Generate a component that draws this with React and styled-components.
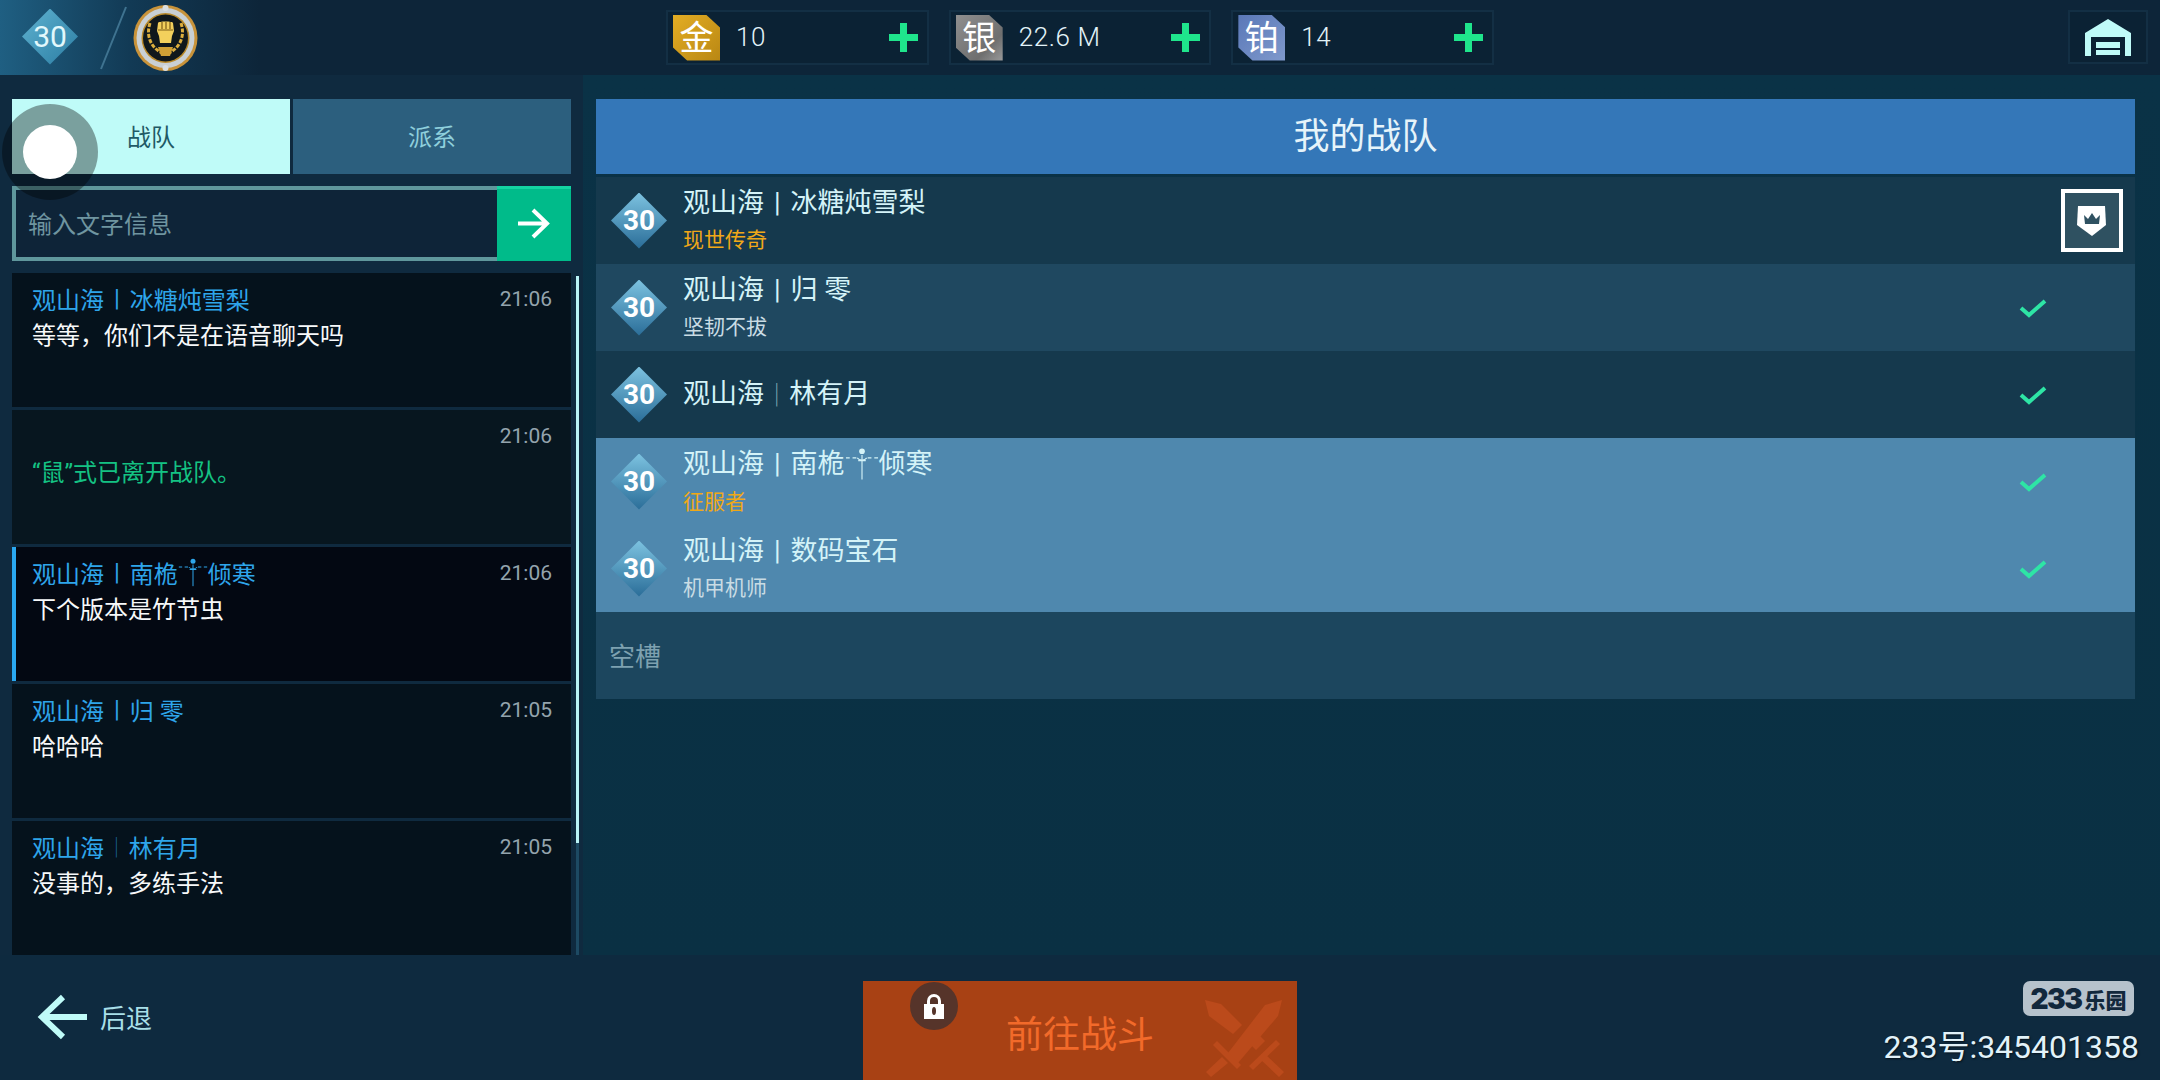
import React from 'react';
import styled, { createGlobalStyle } from 'styled-components';

const GlobalStyle = createGlobalStyle`
	html, body {
		margin: 0;
		padding: 0;
		background: #0d2438;
	}
	body {
		font-family: 'Roboto', 'Noto Sans CJK SC', sans-serif;
	}
`;

const Screen = styled.div`
	position: relative;
	width: 2160px;
	height: 1080px;
	overflow: hidden;
	display: grid;
	grid-template-rows: 75px 880px 125px;
	font-weight: 400;
	color: #dff1f8;
`;

/* top bar */
const TopBar = styled.header`
	display: grid;
	grid-template-columns: 666px 828px 1fr;
	background: linear-gradient(90deg, #1f5f82 0, #123a55 130px, #0d2539 260px, #0d2539 100%);
`;

const PlayerInfo = styled.div`
	display: flex;
	align-items: center;
	padding-left: 22px;
`;

const RankDiamond = styled.div`
	width: 56px;
	height: 56px;
	display: grid;
	place-items: center;
	margin-top: -2px;
	clip-path: polygon(50% 0, 100% 50%, 50% 100%, 0 50%);
	background: linear-gradient(135deg, #5fb2d0, #2b7da3);
	font-size: 30px;
	color: #e2f8fc;
`;

const Slash = styled.svg`
	width: 28px;
	height: 64px;
	margin-left: 21px;
`;

const Medal = styled.svg`
	width: 65px;
	height: 66px;
	margin-left: 6px;
`;

const Wallet = styled.div`
	display: flex;
	align-items: center;
	gap: 20px;
`;

const Currency = styled.div`
	width: 263px;
	height: 55px;
	box-sizing: border-box;
	border: 2px solid #132f44;
	background: #0b2234;
	display: flex;
	align-items: center;
	padding: 0 10px 0 5px;
`;

const CurrencyIcon = styled.div`
	width: 47px;
	height: 46px;
	display: grid;
	place-items: center;
	clip-path: polygon(0 0, 70% 0, 100% 28%, 100% 100%, 30% 100%, 0 72%);
	background: ${(p) => p.$bg};
	color: #fff;
	font-size: 34px;
	line-height: 1;
`;

const CurrencyValue = styled.span`
	margin: 0 0 2px 16px;
	font-size: 26px;
	font-weight: 300;
	letter-spacing: 0.6px;
	color: #e2f3f9;
`;

const PlusIcon = styled.svg`
	width: 29px;
	height: 29px;
	margin-left: auto;
	margin-right: -1px;
`;

const GarageBox = styled.div`
	width: 80px;
	height: 54px;
	box-sizing: border-box;
	margin: 10px 12px 0 auto;
	border: 2px solid #132f44;
	background: #0b2234;
	display: grid;
	place-items: center;
`;

/* middle */
const Middle = styled.main`
	display: grid;
	grid-template-columns: 583px 1fr;
`;

const ChatColumn = styled.section`
	background: #0f2a3f;
	padding: 24px 0 0 12px;
	display: flex;
	flex-direction: column;
	gap: 12px;
`;

const Tabs = styled.div`
	display: flex;
	gap: 3px;
	width: 559px;
`;

const Tab = styled.div`
	flex: 1;
	height: 75px;
	box-sizing: border-box;
	padding-bottom: 3px;
	display: grid;
	place-items: center;
	font-size: 24px;
	background: ${(p) => (p.$active ? '#bffbf8' : '#2c5f7e')};
	color: ${(p) => (p.$active ? '#1f5a66' : '#8fcfdc')};
`;

const InputBar = styled.div`
	width: 559px;
	height: 75px;
	display: flex;
`;

const InputField = styled.div`
	flex: 1;
	box-sizing: border-box;
	border: 4px solid #5f979c;
	border-right: 0;
	background: #0e2438;
	padding: 0 0 2px 12px;
	display: flex;
	align-items: center;
	font-size: 24px;
	color: #6f95a0;
`;

const SendButton = styled.div`
	width: 74px;
	padding-bottom: 4px;
	display: grid;
	place-items: center;
	background: #00bb8a;
	border-top: 3px solid #14d3a2;
	box-sizing: border-box;
`;

const ChatBody = styled.div`
	flex: 1;
	display: flex;
	gap: 5px;
	min-height: 0;
`;

const MessageList = styled.div`
	width: 559px;
	display: flex;
	flex-direction: column;
	gap: 3px;
`;

const Message = styled.article`
	height: 134px;
	box-sizing: border-box;
	padding: 10px 19px 0 ${(p) => (p.$selected ? '16px' : '20px')};
	background: ${(p) => (p.$selected ? '#030812' : p.$system ? '#07161f' : '#05121c')};
	border-left: ${(p) => (p.$selected ? '4px solid #2aa8f0' : '0')};
`;

const MessageHead = styled.div`
	display: flex;
	align-items: center;
	height: 30px;
`;

const Sender = styled.span`
	font-size: 24px;
	color: #2ea5ea;
	display: flex;
	align-items: center;
`;

const Sep = styled.span`
	margin: 0 ${(p) => p.$gap || '10px'};
	font-weight: ${(p) => (p.$thin ? 100 : 400)};
	opacity: ${(p) => (p.$thin ? 0.7 : 1)};
`;

const Time = styled.time`
	margin-left: auto;
	padding-top: 2px;
	font-size: 21px;
	color: #94a4ad;
`;

const MessageText = styled.p`
	margin: 8px 0 0;
	font-size: 24px;
	line-height: 30px;
	color: ${(p) => (p.$system ? '#14c283' : '#f7f9fa')};
`;

const ScrollTrack = styled.div`
	width: 3px;
	margin-top: 3px;
	background: #1d4a63;
`;

const ScrollThumb = styled.div`
	height: 567px;
	background: #b9f3f6;
`;

const SquadPanel = styled.section`
	background: linear-gradient(180deg, #0a3246 0, #0a3043 100%);
	padding: 24px 25px 0 13px;
	display: flex;
	flex-direction: column;
	gap: 3px;
`;

const SquadHeader = styled.h2`
	margin: 0;
	height: 75px;
	box-sizing: border-box;
	padding-bottom: 7px;
	display: grid;
	place-items: center;
	background: #3477b8;
	font-size: 36px;
	font-weight: 400;
	color: #e6f4fa;
`;

const SquadList = styled.div`
	display: flex;
	flex-direction: column;
`;

const rowColors = {
	dark: '#15394d',
	mid: '#1f4860',
	light: '#4f88ae',
	empty: '#1c465e',
};

const SquadRow = styled.div`
	height: 87px;
	display: flex;
	align-items: center;
	padding-left: 15px;
	background: ${(p) => rowColors[p.$tone]};
`;

const LevelDiamond = styled.div`
	width: 56px;
	height: 56px;
	margin-right: 16px;
	flex: none;
	display: grid;
	place-items: center;
	clip-path: polygon(50% 0, 100% 50%, 50% 100%, 0 50%);
	background: linear-gradient(180deg, #7cc2e0 0, #2a6d98 100%);
	font-size: 28px;
	font-weight: 700;
	color: #fff;
`;

const MemberInfo = styled.div`
	display: flex;
	flex-direction: column;
	gap: 10px;
	padding-bottom: 2px;
`;

const MemberName = styled.div`
	display: flex;
	align-items: center;
	font-size: 27px;
	line-height: 30px;
	color: #d4f3f8;
`;

const MemberTitle = styled.div`
	font-size: 21px;
	line-height: 24px;
	color: ${(p) => (p.$gold ? '#f0a818' : '#c9dce4')};
`;

const CheckIcon = styled.svg`
	width: 28px;
	height: 20px;
	margin-left: auto;
	margin-right: 88px;
`;

const LeaderButton = styled.div`
	width: 62px;
	height: 63px;
	box-sizing: border-box;
	margin-left: auto;
	margin-right: 12px;
	border: 4px solid #fff;
	background: #2f5161;
	display: grid;
	place-items: center;
`;

const EmptySlot = styled.span`
	font-size: 26px;
	padding-bottom: 3px;
	color: #7ea1b0;
	margin-left: -2px;
`;

/* bottom bar */
const BottomBar = styled.footer`
	background: #0e2a3f;
	display: grid;
	grid-template-columns: 863px 434px 1fr;
`;

const BackButton = styled.div`
	display: flex;
	align-items: center;
	gap: 13px;
	padding: 0 0 2px 37px;
	height: 125px;
	box-sizing: border-box;
	font-size: 26px;
	color: #a8dfe8;
`;

const BattleButton = styled.div`
	position: relative;
	margin-top: 26px;
	padding-top: 3px;
	background: #a84114;
	display: grid;
	place-items: center;
	font-size: 37px;
	color: #f26a2a;
`;

const LockBadge = styled.div`
	position: absolute;
	left: 47px;
	top: 1px;
	width: 48px;
	height: 48px;
	border-radius: 50%;
	background: #56342a;
	display: grid;
	place-items: center;
`;

const Swords = styled.svg`
	position: absolute;
	right: 12px;
	top: 17px;
	width: 80px;
	height: 80px;
`;

const Watermark = styled.div`
	display: flex;
	flex-direction: column;
	align-items: flex-end;
	padding: 26px 21px 0 0;
	gap: 12px;
`;

const ParkLogo = styled.div`
	width: 111px;
	height: 35px;
	margin-right: 5px;
	border-radius: 7px;
	background: #b6c2cc;
	display: flex;
	align-items: center;
	justify-content: center;
	font-family: 'Inter', 'Noto Sans CJK SC', sans-serif;
	font-size: 28px;
	font-weight: 900;
	letter-spacing: -1.5px;
	color: #12283c;
`;

const ParkLogoCjk = styled.span`
	font-size: 21px;
	letter-spacing: 0;
	margin-left: 3px;
`;

const AccountId = styled.div`
	font-size: 32px;
	line-height: 38px;
	color: #e2f2f9;
	text-shadow: 1px 1px 2px rgba(0, 0, 0, 0.6);
`;

const TouchDot = styled.div`
	position: absolute;
	left: 2px;
	top: 104px;
	width: 96px;
	height: 96px;
	border-radius: 50%;
	background: rgba(0, 0, 0, 0.36);
	display: grid;
	place-items: center;

	&::after {
		content: '';
		width: 54px;
		height: 54px;
		border-radius: 50%;
		background: #fff;
	}
`;

const Ornament = styled.svg`
	width: ${(p) => p.$w}px;
	height: ${(p) => p.$h}px;
	flex: none;
`;

function OrnamentGlyph({ w, h, color }) {
	return (
		<Ornament $w={w} $h={h} viewBox='0 0 36 34' fill='none' stroke={color} strokeWidth='1.2'>
			<path d='M18 8v26M1 11h4M8 11h4M24 11h4M31 11h4' />
			<circle cx='18' cy='4' r='3' fill={color} stroke='none' />
			<path d='M13 11c2 3 8 3 10 0M14 14h8' />
		</Ornament>
	);
}

const coins = [
	{ glyph: '金', value: '10', bg: 'linear-gradient(135deg, #e3ad24, #b98713)' },
	{ glyph: '银', value: '22.6 M', bg: 'linear-gradient(135deg, #8f8f8f, #6f6f6f 70%, #9a9a9a)' },
	{ glyph: '铂', value: '14', bg: 'linear-gradient(135deg, #5a78b8, #7f99cc)' },
];

const messages = [
	{ name: '冰糖炖雪梨', time: '21:06', text: '等等，你们不是在语音聊天吗' },
	{ system: true, time: '21:06', text: '“鼠”式已离开战队。' },
	{ name: '南桅', ornament: '倾寒', selected: true, time: '21:06', text: '下个版本是竹节虫' },
	{ name: '归 零', time: '21:05', text: '哈哈哈' },
	{ name: '林有月', thin: true, time: '21:05', text: '没事的，多练手法' },
];

const members = [
	{ name: '冰糖炖雪梨', title: '现世传奇', gold: true, tone: 'dark', leader: true },
	{ name: '归 零', title: '坚韧不拔', tone: 'mid' },
	{ name: '林有月', tone: 'dark', thin: true },
	{ name: '南桅', ornament: '倾寒', title: '征服者', gold: true, tone: 'light' },
	{ name: '数码宝石', title: '机甲机师', tone: 'light' },
];

function App() {
	return (
		<Screen>
			<GlobalStyle />
			<TopBar>
				<PlayerInfo>
					<RankDiamond>30</RankDiamond>
					<Slash viewBox='0 0 28 64' fill='none'>
						<path d='M27 1L2 63' stroke='#3f7390' strokeWidth='2' />
					</Slash>
					<Medal viewBox='0 0 65 66'>
						<ellipse cx='32.5' cy='33' rx='32' ry='33' fill='#c8933a' />
						<ellipse cx='32.5' cy='33' rx='29' ry='30' fill='#c9d0d4' />
						<ellipse cx='32.5' cy='33' rx='24' ry='25' fill='#b98a2a' />
						<ellipse cx='32.5' cy='33' rx='22.5' ry='23.5' fill='#10181c' />
						<path d='M25 18c0-2 15-2 15 0l1 8-2 5-1 7H27l-1-7-2-5z' fill='#f3d05c' />
						<path d='M29 17v7M33 17v7M37 17v7M25 25h15' stroke='#7d5c17' strokeWidth='1.2' fill='none' />
						<path d='M17 18c-4 12 0 24 12 30M48 18c4 12 0 24-12 30' fill='none' stroke='#dcae3e' strokeWidth='3' strokeDasharray='4 1.5' />
						<path d='M25 42h15l-3 9h-9z' fill='#d0a035' />
						<circle cx='32.5' cy='3' r='3' fill='#d9dee0' />
						<circle cx='32.5' cy='63' r='3' fill='#d9dee0' />
					</Medal>
				</PlayerInfo>
				<Wallet>
					{coins.map((coin) => (
						<Currency key={coin.glyph}>
							<CurrencyIcon $bg={coin.bg}>{coin.glyph}</CurrencyIcon>
							<CurrencyValue>{coin.value}</CurrencyValue>
							<PlusIcon viewBox='0 0 29 29'>
								<path d='M11 0h7v11h11v7H18v11h-7V18H0v-7h11z' fill='#1fe58c' />
							</PlusIcon>
						</Currency>
					))}
				</Wallet>
				<GarageBox>
					<svg width='48' height='37' viewBox='0 0 48 37'>
						<path d='M24 0L47 14V37H41V18H7V37H1V14Z' fill='#bffbf8' />
						<path d='M11 21H37V37H11z' fill='#0b2234' />
						<path d='M12 23H36V29H12zM12 31H36V36H12z' fill='#bffbf8' />
					</svg>
				</GarageBox>
			</TopBar>

			<Middle>
				<ChatColumn>
					<Tabs>
						<Tab $active>战队</Tab>
						<Tab>派系</Tab>
					</Tabs>
					<InputBar>
						<InputField>输入文字信息</InputField>
						<SendButton>
							<svg width='32' height='31' viewBox='0 0 32 31' fill='none' stroke='#fff' strokeWidth='4'>
								<path d='M0 15.5H29M15 2l14 13.5L15 29' />
							</svg>
						</SendButton>
					</InputBar>
					<ChatBody>
						<MessageList>
							{messages.map((msg, i) => (
								<Message key={i} $selected={msg.selected} $system={msg.system}>
									<MessageHead>
										{msg.name && (
											<Sender>
												观山海
												<Sep $thin={msg.thin}>|</Sep>
												{msg.name}
												{msg.ornament && <OrnamentGlyph w={30} h={30} color='#2ea5ea' />}
												{msg.ornament}
											</Sender>
										)}
										<Time>{msg.time}</Time>
									</MessageHead>
									<MessageText $system={msg.system}>{msg.text}</MessageText>
								</Message>
							))}
						</MessageList>
						<ScrollTrack>
							<ScrollThumb />
						</ScrollTrack>
					</ChatBody>
				</ChatColumn>

				<SquadPanel>
					<SquadHeader>我的战队</SquadHeader>
					<SquadList>
						{members.map((m) => (
							<SquadRow key={m.name} $tone={m.tone}>
								<LevelDiamond>30</LevelDiamond>
								<MemberInfo>
									<MemberName>
										观山海
										<Sep $gap='10px' $thin={m.thin}>|</Sep>
										{m.name}
										{m.ornament && <OrnamentGlyph w={34} h={33} color='#d4f3f8' />}
										{m.ornament}
									</MemberName>
									{m.title && <MemberTitle $gold={m.gold}>{m.title}</MemberTitle>}
								</MemberInfo>
								{m.leader ? (
									<LeaderButton>
										<svg width='30' height='30' viewBox='0 0 30 30'>
											<path d='M1 0H28L29 19L15 30L0 19Z' fill='#fff' />
											<path d='M7 9l4 4 4-6 4 6 4-4-1 9H8z' fill='#2f5161' />
										</svg>
									</LeaderButton>
								) : (
									<CheckIcon viewBox='0 0 28 20' fill='none'>
										<path d='M2 10l8 7L26 3' stroke='#2ee5a5' strokeWidth='4' />
									</CheckIcon>
								)}
							</SquadRow>
						))}
						<SquadRow $tone='empty'>
							<EmptySlot>空槽</EmptySlot>
						</SquadRow>
					</SquadList>
				</SquadPanel>
			</Middle>

			<BottomBar>
				<BackButton>
					<svg width='50' height='46' viewBox='0 0 50 46' fill='none' stroke='#bffbf8' strokeWidth='6'>
						<path d='M50 23H5M26 3L5 23l21 20' />
					</svg>
					后退
				</BackButton>
				<BattleButton>
					前往战斗
					<LockBadge>
						<svg width='22' height='26' viewBox='0 0 22 26'>
							<path d='M4 11V8a7 7 0 0114 0v3h-3V8a4 4 0 00-8 0v3z' fill='#fff' />
							<path d='M1 11h20v15H1z' fill='#fff' />
							<ellipse cx='11' cy='18' rx='2' ry='4' fill='#56342a' />
						</svg>
					</LockBadge>
					<Swords viewBox='0 0 80 80' fill='#bb4a1b'>
						{/* blade, guard and handle of each sword */}
						<path d='M77 2L73 18L33 65L23 55L60 7Z' />
						<path d='M8 47l4-4 24 24-4 4zM17 59l6 6L6 79l-5-5z' />
						<path d='M0 2L16 6L37 27L28 36L4 18Z' />
						<path d='M42 43l9-9 9 9-9 9z' />
						<path d='M44 68l27-26 4 4-27 26zM60 56l19 18-5 5-19-18z' />
					</Swords>
				</BattleButton>
				<Watermark>
					<ParkLogo>
						233<ParkLogoCjk>乐园</ParkLogoCjk>
					</ParkLogo>
					<AccountId>233号:345401358</AccountId>
				</Watermark>
			</BottomBar>

			<TouchDot />
		</Screen>
	);
}

export default App;
